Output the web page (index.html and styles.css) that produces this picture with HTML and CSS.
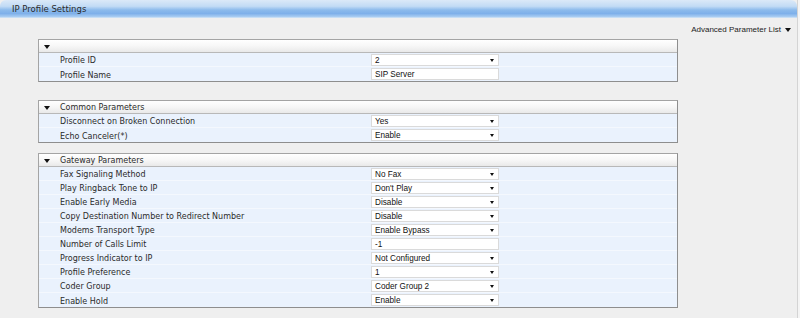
FILE: index.html
```html
<!DOCTYPE html>
<html lang="en">
<head>
    <meta charset="UTF-8">
    <title>IP Profile Settings</title>
    <link rel="stylesheet" href="styles.css">
</head>
<body>
    <div class="page">
        <div class="title-bar">IP Profile Settings</div>

        <div class="toolbar">
            <span class="adv-link">Advanced Parameter List <span class="arrow"></span></span>
        </div>

        <div class="sections">
            <div class="group first">
                <div class="group-head"><span class="arrow"></span><span></span></div>
                <div class="row">
                    <span></span><span class="label">Profile ID</span>
                    <div class="field select">2</div>
                </div>
                <div class="row">
                    <span></span><span class="label">Profile Name</span>
                    <div class="field">SIP Server</div>
                </div>
            </div>

            <div class="group">
                <div class="group-head"><span class="arrow"></span><span>Common Parameters</span></div>
                <div class="row">
                    <span></span><span class="label">Disconnect on Broken Connection</span>
                    <div class="field select">Yes</div>
                </div>
                <div class="row">
                    <span></span><span class="label">Echo Canceler(*)</span>
                    <div class="field select">Enable</div>
                </div>
            </div>

            <div class="group">
                <div class="group-head"><span class="arrow"></span><span>Gateway Parameters</span></div>
                <div class="row">
                    <span></span><span class="label">Fax Signaling Method</span>
                    <div class="field select">No Fax</div>
                </div>
                <div class="row">
                    <span></span><span class="label">Play Ringback Tone to IP</span>
                    <div class="field select">Don't Play</div>
                </div>
                <div class="row">
                    <span></span><span class="label">Enable Early Media</span>
                    <div class="field select">Disable</div>
                </div>
                <div class="row">
                    <span></span><span class="label">Copy Destination Number to Redirect Number</span>
                    <div class="field select">Disable</div>
                </div>
                <div class="row">
                    <span></span><span class="label">Modems Transport Type</span>
                    <div class="field select">Enable Bypass</div>
                </div>
                <div class="row">
                    <span></span><span class="label">Number of Calls Limit</span>
                    <div class="field">-1</div>
                </div>
                <div class="row">
                    <span></span><span class="label">Progress Indicator to IP</span>
                    <div class="field select">Not Configured</div>
                </div>
                <div class="row">
                    <span></span><span class="label">Profile Preference</span>
                    <div class="field select">1</div>
                </div>
                <div class="row">
                    <span></span><span class="label">Coder Group</span>
                    <div class="field select">Coder Group 2</div>
                </div>
                <div class="row">
                    <span></span><span class="label">Enable Hold</span>
                    <div class="field select">Enable</div>
                </div>
            </div>
        </div>
    </div>
</body>
</html>
```

FILE: styles.css
```css
* {
    margin: 0;
    padding: 0;
    box-sizing: border-box;
}

body {
    font-family: 'DejaVu Sans', Verdana, sans-serif;
    font-size: 8px;
    color: #2b2b2b;
    background: #f4f4f4;
    width: 800px;
    height: 318px;
    overflow: hidden;
}

.page {
    width: 798px;
    height: 318px;
    background: #efefef;
    border-right: 1px solid #d4d4d4;
}

.title-bar {
    height: 18px;
    padding-left: 12px;
    line-height: 18px;
    font-size: 8.5px;
    color: #2a2a2a;
    border-radius: 6px 6px 0 0;
    background: linear-gradient(to bottom, #dbe9f8 0%, #c2dbf5 35%, #8dbbec 55%, #7eb0ea 75%, #a6cbf2 92%, #d9e8f6 100%);
}

.toolbar {
    height: 21px;
    display: flex;
    justify-content: flex-end;
    align-items: center;
    padding: 2px 6px 0 0;
}

.adv-link {
    font-family: 'Liberation Sans', Arial, sans-serif;
    font-size: 8px;
    color: #222;
    display: flex;
    align-items: center;
    gap: 4px;
}

.arrow {
    display: inline-block;
    width: 0;
    height: 0;
    border-left: 3.5px solid transparent;
    border-right: 3.5px solid transparent;
    border-top: 4px solid #111;
}

.sections {
    padding-left: 38px;
}

.group {
    width: 640px;
    border: 1px solid #a4a4a4;
    border-right-color: #8e8e8e;
    border-bottom-color: #8e8e8e;
    background: #eaf2fd;
    margin-bottom: 10px;
}

.group.first {
    margin-bottom: 18px;
}

.group-head {
    height: 13px;
    display: grid;
    grid-template-columns: 21px 1fr;
    align-items: center;
    padding-top: 1px;
    background: linear-gradient(to bottom, #ffffff 0%, #f7f7f7 50%, #e9e9e9 100%);
    border-bottom: 1px solid #b8b8b8;
}

.group-head .arrow {
    margin-left: 5px;
}

.row {
    height: 14px;
    display: grid;
    grid-template-columns: 21px 311px 128px;
    align-items: center;
    border-bottom: 1px solid #f4f8fe;
}

.row:last-child {
    border-bottom: none;
}

.label {
    padding-top: 2px;
}

.field {
    height: 12px;
    line-height: 11px;
    padding-left: 3px;
    background: #fff;
    border: 1px solid #dadada;
    font-family: 'Liberation Sans', Arial, sans-serif;
    font-size: 8.2px;
    color: #111;
    position: relative;
}

.field.select::after {
    content: '';
    position: absolute;
    right: 4px;
    top: 4px;
    border-left: 2.5px solid transparent;
    border-right: 2.5px solid transparent;
    border-top: 3px solid #111;
}
```
